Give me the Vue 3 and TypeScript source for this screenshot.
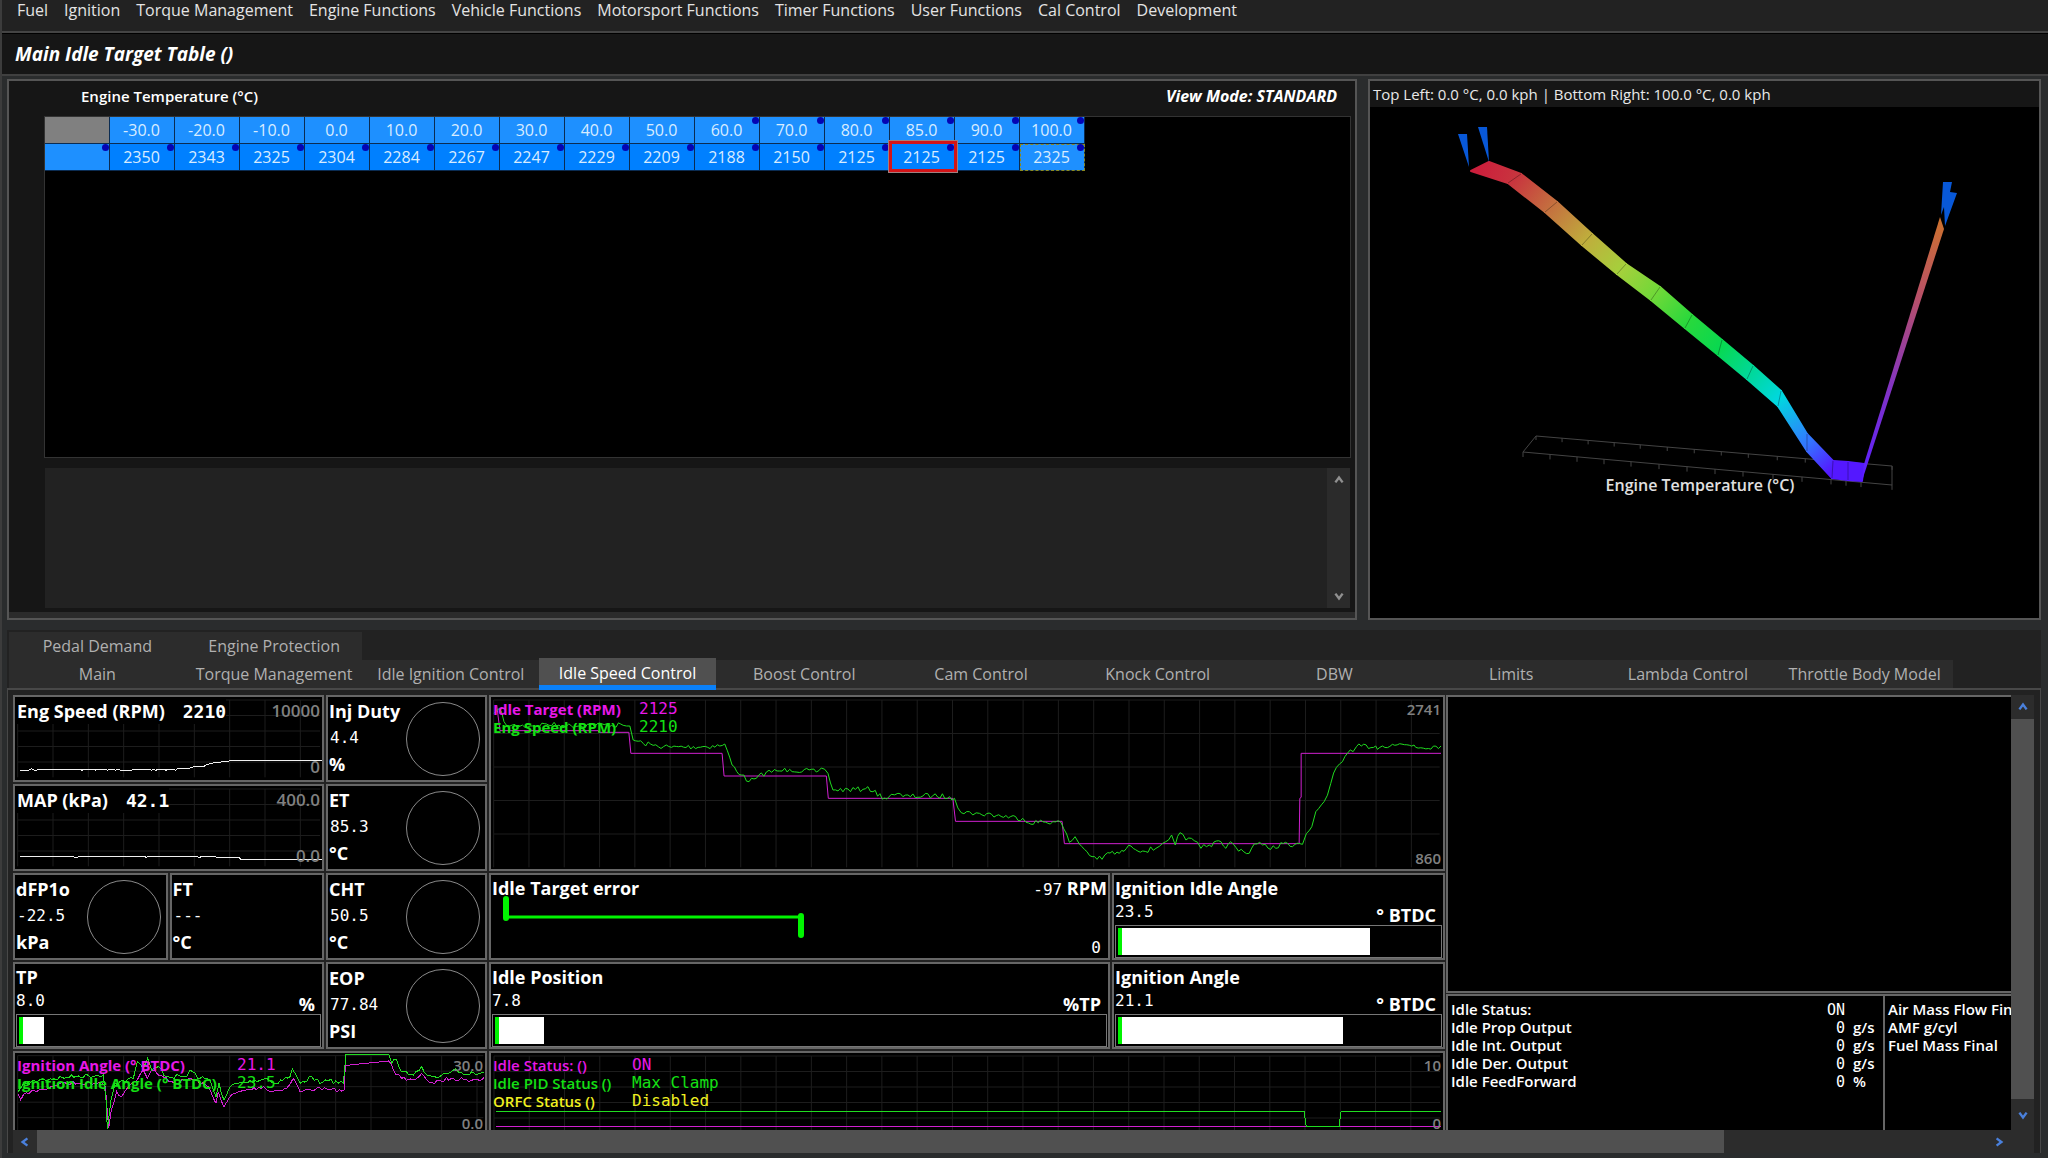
<script setup lang="ts">
type Point = [number, number]

const menus = [
  'Fuel', 'Ignition', 'Torque Management', 'Engine Functions', 'Vehicle Functions',
  'Motorsport Functions', 'Timer Functions', 'User Functions', 'Cal Control', 'Development',
]

const axis = ['-30.0', '-20.0', '-10.0', '0.0', '10.0', '20.0', '30.0', '40.0', '50.0', '60.0', '70.0', '80.0', '85.0', '90.0', '100.0']
const targets = [2350, 2343, 2325, 2304, 2284, 2267, 2247, 2229, 2209, 2188, 2150, 2125, 2125, 2125, 2325]
const firstMarkedAxis = 9
const liveCell = 12
const focusedCell = 14

const upperTabs = ['Pedal Demand', 'Engine Protection']
const lowerTabs = [
  'Main', 'Torque Management', 'Idle Ignition Control', 'Idle Speed Control', 'Boost Control', 'Cam Control',
  'Knock Control', 'DBW', 'Limits', 'Lambda Control', 'Throttle Body Model',
]
const activeTab = 'Idle Speed Control'

const idleParams = [
  { name: 'Idle Status:', value: 'ON', unit: '' },
  { name: 'Idle Prop Output', value: '0', unit: 'g/s' },
  { name: 'Idle Int. Output', value: '0', unit: 'g/s' },
  { name: 'Idle Der. Output', value: '0', unit: 'g/s' },
  { name: 'Idle FeedForward', value: '0', unit: '%' },
]
const massParams = ['Air Mass Flow Final', 'AMF g/cyl', 'Fuel Mass Final']

/* Joins points into an SVG points attribute. */
function line(points: Point[]): string {
  return points.map(([x, y]) => `${x.toFixed(1)},${y.toFixed(1)}`).join(' ')
}

/* Same, with repeatable sensor noise between the given points. */
function noisy(points: Point[], amplitude: number, step: number): string {
  let seed = 7
  const random = () => {
    seed = (seed * 16807) % 2147483647
    return seed / 2147483647 - 0.5
  }
  const out: Point[] = []
  for (let i = 0; i < points.length - 1; i++) {
    const [x0, y0] = points[i]
    const [x1, y1] = points[i + 1]
    out.push([x0, y0])
    const count = Math.floor((x1 - x0) / step)
    for (let k = 1; k < count; k++) {
      const t = k / count
      out.push([x0 + (x1 - x0) * t, y0 + (y1 - y0) * t + random() * amplitude * 2])
    }
  }
  out.push(points[points.length - 1])
  return line(out)
}

function range(start: number, end: number, step: number): number[] {
  const out: number[] = []
  for (let v = start; v < end; v += step) out.push(v)
  return out
}

const targetTrace = line([
  [50, 45], [60, 122], [355, 122], [358, 127], [447, 127], [453, 190], [727, 190], [733, 258], [1040, 258],
  [1046, 325], [1420, 325], [1428, 394], [1748, 394], [1755, 461], [2460, 461], [2462, 325], [2466, 322], [2466, 190], [2886, 190],
])
const speedTrace = noisy([
  [42, 70], [50, 62], [58, 55], [72, 95], [90, 108], [150, 108], [200, 102], [260, 108], [330, 104], [430, 106], [450, 108], [460, 150],
  [490, 160], [520, 166], [575, 172], [720, 168], [735, 162], [757, 225], [785, 255], [808, 275], [830, 265], [860, 246],
  [900, 243], [930, 238], [1010, 246], [1025, 234], [1045, 250], [1060, 300], [1150, 298], [1165, 290], [1180, 305], [1222, 327],
  [1235, 313], [1255, 310], [1270, 320], [1360, 317], [1410, 320], [1425, 325], [1445, 368], [1470, 365], [1480, 375], [1500, 370],
  [1630, 385], [1640, 397], [1720, 395], [1745, 398], [1770, 457], [1787, 440], [1800, 462], [1838, 500], [1868, 508],
  [1885, 488], [1920, 490], [1955, 468], [1990, 483], [2030, 475], [2050, 460], [2077, 435], [2088, 465], [2102, 428],
  [2120, 450], [2145, 452], [2165, 475], [2190, 465], [2225, 455], [2240, 475], [2255, 455], [2270, 472], [2310, 490],
  [2325, 462], [2350, 465], [2390, 475], [2405, 458], [2440, 470], [2470, 463], [2482, 430], [2498, 410], [2510, 365],
  [2535, 335], [2555, 280], [2572, 232], [2590, 215], [2605, 190], [2622, 185], [2632, 170], [2690, 168], [2695, 178],
  [2710, 168], [2740, 163], [2805, 165], [2810, 172], [2886, 168],
], 8, 7)

const rpmTrace = line([
  [60, 240], [88, 240], [94, 236], [102, 240], [112, 240], [118, 237], [240, 237], [246, 241], [252, 237], [284, 237],
  [287, 241], [291, 237], [316, 237], [322, 241], [328, 237], [342, 237], [347, 241], [352, 237], [360, 240], [396, 240],
  [402, 237], [448, 237], [454, 241], [460, 237], [468, 241], [474, 237], [494, 237], [498, 241], [503, 237], [520, 237],
  [526, 241], [532, 237], [566, 236], [584, 229], [612, 229], [618, 225], [645, 217], [682, 215], [690, 211], [966, 211],
])
const mapTrace = line([
  [60, 232], [220, 232], [226, 236], [232, 236], [238, 232], [435, 232], [438, 237], [442, 232], [592, 232], [598, 237],
  [604, 232], [647, 232], [650, 236], [718, 236], [722, 241], [966, 241],
])

const idleAngleTrace = noisy([
  [55, 665], [65, 650], [80, 640], [130, 628], [200, 622], [235, 618], [310, 615], [318, 690], [322, 778], [333, 690], [345, 640],
  [400, 625], [412, 575], [430, 595], [443, 565], [455, 600], [475, 590], [500, 620], [560, 620], [570, 600], [600, 625],
  [630, 630], [648, 680], [657, 640], [672, 690], [695, 645], [800, 625], [820, 640], [870, 620], [877, 597], [900, 640],
  [935, 620], [960, 640], [985, 632], [1030, 640], [1038, 553], [1040, 553],
], 7, 7)
const idleAngleTail = noisy([
  [1166, 553], [1175, 580], [1190, 570], [1205, 605], [1240, 615], [1265, 590], [1280, 615], [1320, 620], [1360, 600],
  [1400, 612], [1452, 606],
], 7, 7)
const angleTrace = noisy([
  [55, 672], [62, 690], [80, 668], [130, 658], [180, 640], [235, 640], [305, 637], [316, 650], [326, 775], [334, 720], [350, 665], [365, 680],
  [385, 650], [405, 635], [430, 600], [442, 625], [455, 600], [475, 615], [530, 640], [570, 625], [625, 650], [648, 700],
  [655, 665], [672, 710], [690, 680], [720, 665], [790, 650], [810, 665], [860, 655], [880, 625], [900, 665], [950, 655],
  [990, 660], [1032, 662], [1036, 587], [1040, 586],
], 6, 7)
const angleTail = noisy([
  [1165, 573], [1180, 600], [1205, 625], [1240, 630], [1265, 610], [1290, 638], [1360, 625], [1400, 630], [1452, 623],
], 7, 7)

/* Surface ribbon: back edge, front edge and colour at each breakpoint. */
const back: Point[] = [
  [119, 55], [151, 67], [187, 95], [222, 127], [256, 157], [290, 180], [322, 208], [352, 233], [383, 259], [411, 284],
  [437, 327], [463, 354], [478, 355], [494, 357],
]
const front: Point[] = [
  [101, 64], [138, 76], [175, 105], [212, 138], [247, 167], [281, 193], [315, 221], [348, 248], [377, 272], [408, 299],
  [437, 344], [462, 371], [478, 373], [492, 374],
]
const shades = [
  '#cc1f3c', '#c8343e', '#c4703f', '#bfae3c', '#a5d03c', '#70d838', '#28d83c', '#08d850', '#00d898', '#00d8e0',
  '#3278ff', '#5418ff', '#5418ff', '#5418ff',
]
const ribbon = back.slice(0, -1).map((b, i) => ({
  points: line([b, back[i + 1], front[i + 1], front[i]]),
  x1: (b[0] + front[i][0]) / 2,
  y1: (b[1] + front[i][1]) / 2,
  x2: (back[i + 1][0] + front[i + 1][0]) / 2,
  y2: (back[i + 1][1] + front[i + 1][1]) / 2,
  from: shades[i],
  to: shades[i + 1],
}))
const ticks = [0, 27, 54, 81, 108, 136, 164, 192, 220, 250, 279, 308, 323, 338, 369]
</script>

<template>
  <div class="app">
    <nav class="menu">
      <button v-for="m in menus" :key="m" type="button">{{ m }}</button>
    </nav>
    <h1 class="title">Main Idle Target Table ()</h1>

    <main class="work">
      <div class="panels">
        <section class="panel">
          <header class="panel-head">
            <span>Engine Temperature (°C)</span>
            <em>View Mode: STANDARD</em>
          </header>
          <div class="table-area">
            <table>
              <tbody>
                <tr class="axis">
                  <td class="corner"></td>
                  <th v-for="(a, i) in axis" :key="a" scope="col" :class="{ marked: i >= firstMarkedAxis }">{{ a }}</th>
                </tr>
                <tr class="values">
                  <td class="row-head marked"></td>
                  <td
                    v-for="(t, i) in targets"
                    :key="i"
                    class="marked"
                    :class="{ live: i === liveCell, focused: i === focusedCell }"
                  >{{ t }}</td>
                </tr>
              </tbody>
            </table>
          </div>
          <div class="notes">
            <textarea aria-label="Table notes"></textarea>
            <div class="notes-scroll">
              <button type="button" aria-label="Scroll notes up"><svg viewBox="0 0 10 10"><path d="M2 7 5 3 8 7" /></svg></button>
              <button type="button" aria-label="Scroll notes down"><svg viewBox="0 0 10 10"><path d="M2 3 5 7 8 3" /></svg></button>
            </div>
          </div>
          <div class="splitter"></div>
        </section>

        <section class="panel plot">
          <header class="plot-head">Top Left: 0.0 °C, 0.0 kph | Bottom Right: 100.0 °C, 0.0 kph</header>
          <svg class="surface" viewBox="0 0 669 511" role="img" aria-label="Idle target surface">
            <defs>
              <linearGradient
                v-for="(q, i) in ribbon"
                :id="'band' + i"
                :key="i"
                gradientUnits="userSpaceOnUse"
                :x1="q.x1" :y1="q.y1" :x2="q.x2" :y2="q.y2"
              >
                <stop offset="0" :stop-color="q.from" />
                <stop offset="1" :stop-color="q.to" />
              </linearGradient>
              <linearGradient id="rise" gradientUnits="userSpaceOnUse" x1="494" y1="365" x2="572" y2="115">
                <stop offset="0" stop-color="#5c20ff" />
                <stop offset="0.35" stop-color="#8434c0" />
                <stop offset="0.7" stop-color="#b85068" />
                <stop offset="1" stop-color="#cc7030" />
              </linearGradient>
            </defs>
            <g class="floor">
              <polygon points="166,329 522,359 522,378 153,345" />
              <path v-for="t in ticks" :key="'b' + t" :d="`M${166 + t * 0.965} ${329 + t * 0.081}v4`" />
              <path v-for="t in ticks" :key="'f' + t" :d="`M${153 + t} ${345 + t * 0.089}v5`" />
            </g>
            <polygon
              v-for="(q, i) in ribbon"
              :key="'q' + i"
              :points="q.points"
              :fill="`url(#band${i})`"
              :stroke="`url(#band${i})`"
              stroke-width="2"
              stroke-linejoin="round"
            />
            <path
              v-for="(b, i) in back.slice(1, 13)"
              :key="'s' + i"
              class="seam"
              :d="`M${b[0]} ${b[1]}L${front[i + 1][0]} ${front[i + 1][1]}`"
            />
            <polygon points="492,374 494,357 570,110 574,122" fill="url(#rise)" />
            <g fill="#0858d8">
              <polygon points="88,27 97,27 99,60" />
              <polygon points="108,20 117,20 119,55" />
              <polygon points="573,75 582,75 580,85 587,86 575,119 574,100 571,108" />
            </g>
            <text x="330" y="384" text-anchor="middle">Engine Temperature (°C)</text>
          </svg>
        </section>
      </div>

      <section class="lower">
        <div class="tabs" role="tablist">
          <div class="tab-row">
            <button v-for="t in upperTabs" :key="t" type="button" role="tab">{{ t }}</button>
          </div>
          <div class="tab-row">
            <button v-for="t in lowerTabs" :key="t" type="button" role="tab" :class="{ active: t === activeTab }" :aria-selected="t === activeTab">{{ t }}</button>
          </div>
        </div>

        <div class="pane">
          <div class="pane-main">
            <div class="viewport">
              <div class="gauges">
                <div class="box trend">
                  <svg class="chart" viewBox="45 21 921 249" preserveAspectRatio="none">
                    <g class="grid">
                      <path v-for="x in range(53, 960, 106)" :key="x" :d="`M${x} 30V262`" />
                      <path v-for="y in range(30, 262, 46.5)" :key="y" :d="`M53 ${y}H960`" />
                    </g>
                    <polyline class="white" :points="rpmTrace" />
                  </svg>
                  <p><span class="mask">Eng Speed (RPM)<b>2210</b></span><i>10000</i></p>
                  <p><i>0</i></p>
                </div>
                <div class="box dial">
                  <p>Inj Duty</p><output>4.4</output><p>%</p><span class="ring"></span>
                </div>
                <div class="box wide">
                  <svg class="chart" viewBox="33 21 2859 516" preserveAspectRatio="none">
                    <g class="grid">
                      <path v-for="x in range(41, 2890, 106)" :key="x" :d="`M${x} 30V532`" />
                      <path v-for="y in range(30, 500, 100.5)" :key="y" :d="`M41 ${y}H2882`" />
                    </g>
                    <polyline class="magenta" :points="targetTrace" />
                    <polyline class="green" :points="speedTrace" />
                  </svg>
                  <div class="legend">
                    <p class="c-magenta"><span>Idle Target (RPM)</span><b>2125</b></p>
                    <p class="c-green"><span>Eng Speed (RPM)</span><b>2210</b></p>
                  </div>
                  <div class="scale"><i>2741</i><i>860</i></div>
                </div>

                <div class="box trend">
                  <svg class="chart" viewBox="45 21 921 249" preserveAspectRatio="none">
                    <g class="grid">
                      <path v-for="x in range(53, 960, 106)" :key="x" :d="`M${x} 30V262`" />
                      <path v-for="y in range(30, 262, 46.5)" :key="y" :d="`M53 ${y}H960`" />
                    </g>
                    <polyline class="white" :points="mapTrace" />
                  </svg>
                  <p><span class="mask">MAP (kPa)<b>42.1</b></span><i>400.0</i></p>
                  <p><i>0.0</i></p>
                </div>
                <div class="box dial">
                  <p>ET</p><output>85.3</output><p>°C</p><span class="ring"></span>
                </div>

                <div class="pair">
                  <div class="box dial"><p>dFP1o</p><output>-22.5</output><p>kPa</p><span class="ring"></span></div>
                  <div class="box dial"><p>FT</p><output>---</output><p>°C</p></div>
                </div>
                <div class="box dial">
                  <p>CHT</p><output>50.5</output><p>°C</p><span class="ring"></span>
                </div>
                <div class="box error">
                  <svg class="chart" viewBox="0 0 617 83" preserveAspectRatio="none">
                    <path d="M15 42H310" stroke-width="3" />
                    <path d="M15 24V43M310 41V60" stroke-width="6" stroke-linecap="round" />
                  </svg>
                  <p><span>Idle Target error</span><span><b>-97</b> RPM</span></p>
                  <p class="end"><b>0</b></p>
                </div>
                <div class="box bar">
                  <p>Ignition Idle Angle</p>
                  <div class="reading"><output>23.5</output><span>° BTDC</span></div>
                  <div class="track"><span :style="{ width: '78.5%' }"></span></div>
                </div>

                <div class="box bar">
                  <p>TP</p>
                  <div class="reading"><output>8.0</output><span>%</span></div>
                  <div class="track"><span :style="{ width: '8.5%' }"></span></div>
                </div>
                <div class="box dial">
                  <p>EOP</p><output>77.84</output><p>PSI</p><span class="ring"></span>
                </div>
                <div class="box bar">
                  <p>Idle Position</p>
                  <div class="reading"><output>7.8</output><span>%TP</span></div>
                  <div class="track"><span :style="{ width: '8%' }"></span></div>
                </div>
                <div class="box bar">
                  <p>Ignition Angle</p>
                  <div class="reading"><output>21.1</output><span>° BTDC</span></div>
                  <div class="track"><span :style="{ width: '70%' }"></span></div>
                </div>

                <div class="box span2">
                  <svg class="chart" viewBox="45 549 1410 249" preserveAspectRatio="none">
                    <g class="grid">
                      <path v-for="x in range(53, 1450, 106)" :key="x" :d="`M${x} 557V790`" />
                      <path v-for="y in range(557, 790, 46.5)" :key="y" :d="`M53 ${y}H1450`" />
                    </g>
                    <polyline class="magenta" :points="angleTrace + ' ' + angleTail" />
                    <polyline class="green" :points="idleAngleTrace + ' ' + idleAngleTail" />
                  </svg>
                  <div class="legend angle">
                    <p class="c-magenta"><span>Ignition Angle (° BTDC)</span><b>21.1</b></p>
                    <p class="c-green"><span>Ignition Idle Angle (° BTDC)</span><b>23.5</b></p>
                  </div>
                  <div class="scale low"><i>30.0</i><i>0.0</i></div>
                </div>
                <div class="box span2">
                  <svg class="chart" viewBox="0 0 953 83" preserveAspectRatio="none">
                    <g class="grid">
                      <path v-for="x in range(3, 950, 35.3)" :key="x" :d="`M${x} 3V80`" />
                      <path v-for="y in range(3, 80, 15.5)" :key="y" :d="`M3 ${y}H950`" />
                    </g>
                    <polyline class="magenta" points="5,73 951,73" />
                    <polyline class="green" points="5,58 814,58 816,73 849,73 851,58 951,58" />
                  </svg>
                  <div class="legend status">
                    <p class="c-magenta"><span>Idle Status: ()</span><b>ON</b></p>
                    <p class="c-green"><span>Idle PID Status ()</span><b>Max Clamp</b></p>
                    <p class="c-yellow"><span>ORFC Status ()</span><b>Disabled</b></p>
                  </div>
                  <div class="scale low"><i>10</i><i>0</i></div>
                </div>
              </div>

              <div class="side">
                <div class="box blank"></div>
                <div class="lists">
                  <div class="box list">
                    <dl>
                      <div v-for="p in idleParams" :key="p.name">
                        <dt>{{ p.name }}</dt><dd>{{ p.value }}</dd><dd class="unit">{{ p.unit }}</dd>
                      </div>
                    </dl>
                  </div>
                  <div class="box list grow">
                    <p v-for="m in massParams" :key="m">{{ m }}</p>
                  </div>
                </div>
              </div>
            </div>
            <div class="vbar">
              <button type="button" aria-label="Scroll up"><svg viewBox="0 0 10 10"><path d="M2 7 5 3 8 7" /></svg></button>
              <span class="thumb"></span>
              <button type="button" class="tall" aria-label="Scroll down"><svg viewBox="0 0 10 10"><path d="M2 3 5 7 8 3" /></svg></button>
            </div>
          </div>
          <div class="hbar">
            <button type="button" aria-label="Scroll left"><svg viewBox="0 0 10 10"><path d="M7 2 3 5 7 8" /></svg></button>
            <span class="track-h"><span class="thumb" :style="{ width: '86.5%' }"></span></span>
            <button type="button" aria-label="Scroll right"><svg viewBox="0 0 10 10"><path d="M3 2 7 5 3 8" /></svg></button>
            <span class="corner"></span>
          </div>
        </div>
      </section>
    </main>
  </div>
</template>

<style>
body {
  margin: 0;
  background: #2a2c2d;
}
</style>

<style scoped>
* {
  box-sizing: border-box;
}
.app {
  display: flex;
  flex-direction: column;
  height: 100vh;
  overflow: hidden;
  border-left: 2px solid #3c3c3c;
  background: #2a2c2d;
  color: #fff;
  font-family: "Open Sans", "Noto Sans", sans-serif;
  font-size: 16px;
  line-height: 20px;
}
p, dl, dd, h1 {
  margin: 0;
}
i {
  font-style: normal;
}
button {
  padding: 0;
  border: 0;
  background: none;
  color: inherit;
  font: inherit;
}
.menu {
  display: flex;
  gap: 16px;
  height: 33px;
  flex: none;
  align-items: flex-start;
  padding: 0 15px;
  border-bottom: 2px solid #444;
  background: #222;
  color: #e4e4e4;
}
.menu button {
  white-space: nowrap;
}
.title {
  flex: none;
  padding: 10px 13px;
  border-top: 1px solid #000;
  border-bottom: 2px solid #404040;
  background: #161616;
  font-size: 19px;
  font-style: italic;
  font-weight: 700;
  line-height: 20px;
}
.work {
  display: flex;
  flex: 1;
  min-height: 0;
  flex-direction: column;
  gap: 10px;
  padding: 3px 7px 5px 5px;
}
.panels {
  display: grid;
  flex: none;
  grid-template-columns: minmax(0, 1350fr) minmax(0, 673fr);
  gap: 11px;
}
.panel {
  display: flex;
  flex-direction: column;
  border: 2px solid #555;
  background: #161616;
}
.panel-head {
  display: flex;
  justify-content: space-between;
  padding: 5px 18px 10px 72px;
  font-size: 15px;
  font-weight: 600;
}
.panel-head em {
  font-size: 16px;
  font-weight: 700;
}
.table-area {
  height: 342px;
  margin: 0 4px 0 35px;
  border: 1px solid #333;
  background: #000;
}
table {
  border-collapse: separate;
  border-spacing: 0;
  table-layout: fixed;
  width: 1040px;
  color: #d8ecff;
}
td, th {
  position: relative;
  height: 27px;
  padding: 0 1px 0 0;
  border-right: 1px solid #0b2c52;
  border-bottom: 1px solid #0b2c52;
  font-weight: 400;
  text-align: center;
}
.axis th, .row-head {
  background: #1e90ff;
}
.corner {
  background: #808080;
}
.values td {
  background: #0080ff;
}
.values .row-head, .values .focused {
  background: #1e90ff;
}
.values .focused {
  outline: 1px dashed #8a8a20;
  outline-offset: -1px;
}
.marked::after {
  content: "";
  position: absolute;
  top: 0;
  right: 0;
  width: 7px;
  height: 7px;
  border-radius: 50%;
  background: #0404b4;
}
.live::before {
  content: "";
  position: absolute;
  z-index: 1;
  inset: -3px -3px -2px -1px;
  border: 3px solid #d41418;
  outline: 1px solid #a08080;
}
.notes {
  display: flex;
  height: 140px;
  margin: 10px 5px 0 36px;
  background: #222;
}
.notes textarea {
  flex: 1;
  border: 0;
  background: none;
  color: inherit;
  resize: none;
}
.notes-scroll {
  display: flex;
  width: 23px;
  flex-direction: column;
  justify-content: space-between;
  background: #2b2b2b;
}
.notes-scroll button {
  height: 24px;
  line-height: 0;
}
button svg {
  width: 12px;
  height: 12px;
  fill: none;
  stroke: #909090;
  stroke-width: 2;
}
.splitter {
  height: 6px;
  margin-top: 4px;
  background: #2b2b2b;
}
.plot {
  background: #000;
}
.plot-head {
  height: 26px;
  padding: 3px;
  background: #161616;
  color: #e8e8e8;
  font-size: 15px;
}
.surface {
  display: block;
  flex: 1;
  width: 100%;
  min-height: 0;
}
.surface text {
  fill: #e0e0e0;
  font-size: 16px;
  font-weight: 600;
}
.floor {
  fill: none;
  stroke: #444;
}
.seam {
  stroke: #000;
  stroke-opacity: 0.3;
}
.lower {
  display: flex;
  flex: 1;
  min-height: 0;
  flex-direction: column;
  background: #222;
}
.tabs {
  position: relative;
  display: flex;
  flex: none;
  flex-direction: column;
  padding: 2px 0 0 2px;
  color: #b0b0b0;
}
.tab-row {
  display: grid;
  grid-template-columns: repeat(11, minmax(0, 1fr));
  height: 28px;
  margin-right: 88px;
}
.tab-row button {
  height: 28px;
  background: #2c2c2c;
  white-space: nowrap;
}
.tab-row .active {
  height: 32px;
  margin-top: -2px;
  padding-top: 2px;
  border-bottom: 5px solid #0a80f8;
  background: #505050;
  color: #fff;
}
.pane {
  display: flex;
  flex: 1;
  min-height: 0;
  flex-direction: column;
  padding: 5px 6px 0 5px;
  border: 1px solid #484848;
  border-top-width: 2px;
  border-bottom: 0;
}
.pane-main {
  display: flex;
  flex: 1;
  min-height: 0;
}
.viewport {
  display: flex;
  flex: 1;
  min-width: 0;
  gap: 1px;
  overflow: hidden;
}
.gauges {
  display: grid;
  flex: none;
  align-content: start;
  grid-auto-rows: 87px;
  grid-template-columns: 311px 161px 621px 333px;
  gap: 2px;
  font-size: 18px;
  font-weight: 700;
}
.box {
  position: relative;
  overflow: hidden;
  min-width: 0;
  border: 2px solid #666;
  background: #000;
}
.box b, output, dd {
  font-family: "DejaVu Sans Mono", monospace;
  font-weight: 400;
}
.box p {
  white-space: nowrap;
}
.wide {
  grid-column: 3 / 5;
  grid-row: 1 / 3;
}
.span2 {
  grid-column: span 2;
}
.pair {
  display: grid;
  grid-template-columns: 1fr 1fr;
  gap: 2px;
}
.chart {
  position: absolute;
  inset: 0;
  width: 100%;
  height: 100%;
  fill: none;
}
.chart * {
  vector-effect: non-scaling-stroke;
}
.grid {
  stroke: #1d1d1d;
}
.white {
  stroke: #f0f0f0;
  shape-rendering: crispEdges;
}
.magenta {
  stroke: #d020d0;
  shape-rendering: crispEdges;
}
.green {
  stroke: #20dc20;
  shape-rendering: crispEdges;
}
.error .chart {
  stroke: #00f400;
}
.trend {
  display: flex;
  flex-direction: column;
  justify-content: space-between;
  padding: 2px 2px 1px;
}
.trend p {
  position: relative;
  display: flex;
  justify-content: space-between;
  line-height: 24px;
}
.trend p:last-child {
  justify-content: flex-end;
}
.trend i {
  color: #808080;
  font-size: 17px;
  font-weight: 600;
}
.trend b {
  margin-left: 18px;
  font-size: 18px;
  font-weight: 700;
}
.mask {
  background: #000;
}
.dial {
  display: flex;
  flex-direction: column;
  padding: 0 1px;
}
.dial p {
  line-height: 28px;
}
.dial output {
  padding-left: 1px;
  font-size: 16px;
  line-height: 25px;
}
.ring {
  position: absolute;
  top: 5px;
  right: 5px;
  width: 74px;
  height: 74px;
  border: 1px solid #8a8a8a;
  border-radius: 50%;
}
.error {
  display: flex;
  flex-direction: column;
  justify-content: space-between;
  padding: 0 1px;
}
.error p {
  position: relative;
  display: flex;
  justify-content: space-between;
  line-height: 26px;
}
.error b {
  font-size: 16px;
}
.error .end {
  justify-content: flex-end;
  padding-right: 6px;
  line-height: 20px;
}
.bar {
  padding: 0 1px;
}
.bar p {
  line-height: 26px;
}
.reading {
  display: flex;
  justify-content: space-between;
  height: 24px;
  padding-right: 6px;
  line-height: 22px;
}
.reading output {
  font-size: 16px;
}
.reading span {
  line-height: 28px;
}
.track {
  position: relative;
  height: 33px;
  padding: 2px;
  border: 1px solid #777;
}
.track span {
  display: block;
  height: 100%;
  border-left: 4px solid #00f400;
  background: #fff;
}
.legend {
  position: absolute;
  top: 3px;
  left: 2px;
  font-size: 15px;
}
.legend p {
  display: flex;
  gap: 18px;
  line-height: 18px;
}
.legend span {
  min-width: 128px;
}
.legend.angle span {
  min-width: 202px;
}
.legend.status span {
  min-width: 121px;
}
.legend b {
  font-size: 16px;
}
.c-magenta {
  color: #e818e8;
}
.c-green {
  color: #14e014;
}
.c-yellow {
  color: #f0f020;
}
.legend.status {
  font-weight: 600;
}
.scale {
  position: absolute;
  top: 2px;
  right: 2px;
  bottom: 1px;
  display: flex;
  flex-direction: column;
  justify-content: space-between;
  color: #808080;
  font-size: 15px;
  font-weight: 600;
  text-align: right;
}
.scale.low {
  bottom: 3px;
}
.side {
  display: flex;
  flex: 1;
  min-width: 0;
  flex-direction: column;
  gap: 1px;
}
.blank {
  height: 298px;
  flex: none;
  border-right: 0;
}
.lists {
  display: flex;
  flex: 1;
}
.list {
  width: 439px;
  flex: none;
  padding: 4px 6px 0 3px;
  border-bottom: 0;
  font-size: 15px;
  font-weight: 600;
  line-height: 18px;
}
.list.grow {
  flex: 1;
  border-left: 0;
  border-right: 0;
}
dl div {
  display: flex;
  height: 18px;
  align-items: baseline;
}
dt {
  flex: 1;
}
.list .unit {
  width: 32px;
  padding-left: 8px;
  font-family: inherit;
  font-weight: 600;
  white-space: nowrap;
}
.vbar {
  display: flex;
  width: 23px;
  flex: none;
  flex-direction: column;
  background: #2c2c2c;
}
.vbar button {
  height: 24px;
  line-height: 0;
}
.vbar .tall {
  height: 31px;
}
.thumb {
  flex: 1;
  background: #505050;
}
.vbar svg, .hbar svg {
  stroke: #4a80dc;
}
.hbar {
  display: flex;
  height: 23px;
  flex: none;
  background: #2c2c2c;
}
.hbar button {
  width: 24px;
  line-height: 0;
}
.track-h {
  display: flex;
  flex: 1;
}
.track-h .thumb {
  flex: none;
}
.hbar .corner {
  width: 23px;
  background: none;
}
</style>
